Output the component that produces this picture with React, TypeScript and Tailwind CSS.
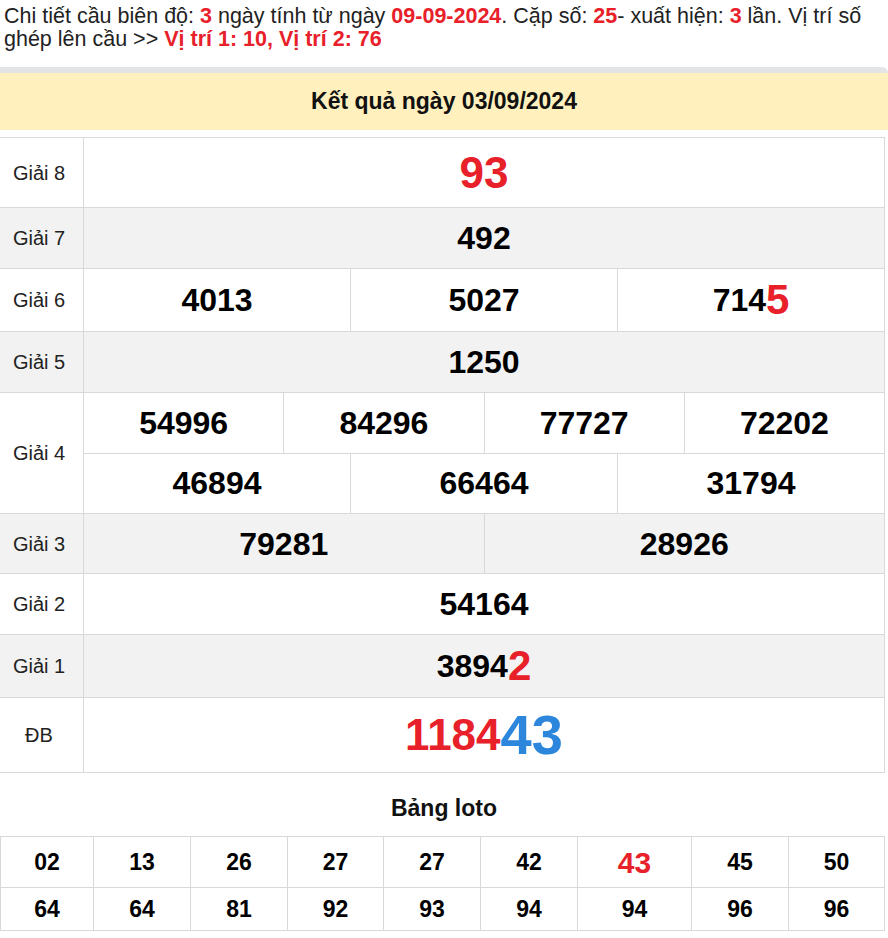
const border = "border-[#d9d9d9]";

type Cell = { text: string; tail?: string; tailClass?: string; className?: string };

const rows: { label: string; shade: boolean; lines: Cell[][]; height: string }[] = [
  {
    label: "Giải 8",
    shade: false,
    height: "h-[70px]",
    lines: [[{ text: "93", className: "text-[44px] text-[#e8202a]" }]],
  },
  { label: "Giải 7", shade: true, height: "h-[61px]", lines: [[{ text: "492" }]] },
  {
    label: "Giải 6",
    shade: false,
    height: "h-[63px]",
    lines: [
      [
        { text: "4013" },
        { text: "5027" },
        { text: "714", tail: "5", tailClass: "text-[42px] text-[#e8202a]" },
      ],
    ],
  },
  { label: "Giải 5", shade: true, height: "h-[61px]", lines: [[{ text: "1250" }]] },
  {
    label: "Giải 4",
    shade: false,
    height: "h-[121px]",
    lines: [
      [{ text: "54996" }, { text: "84296" }, { text: "77727" }, { text: "72202" }],
      [{ text: "46894" }, { text: "66464" }, { text: "31794" }],
    ],
  },
  { label: "Giải 3", shade: true, height: "h-[60px]", lines: [[{ text: "79281" }, { text: "28926" }]] },
  { label: "Giải 2", shade: false, height: "h-[61px]", lines: [[{ text: "54164" }]] },
  {
    label: "Giải 1",
    shade: true,
    height: "h-[63px]",
    lines: [[{ text: "3894", tail: "2", tailClass: "text-[42px] text-[#e8202a]" }]],
  },
  {
    label: "ĐB",
    shade: false,
    height: "h-[75px]",
    lines: [
      [
        {
          text: "1184",
          tail: "43",
          tailClass: "text-[56px] text-[#2b86dc]",
          className: "text-[44px] text-[#e8202a]",
        },
      ],
    ],
  },
];

const loto = [
  ["02", "13", "26", "27", "27", "42", "43", "45", "50"],
  ["64", "64", "81", "92", "93", "94", "94", "96", "96"],
];

const lotoWidths = ["w-[93px]", "w-[97px]", "w-[97px]", "w-[96px]", "w-[97px]", "w-[97px]", "w-[114px]", "w-[97px]", "w-[96px]"];

function PrizeRow({ label, shade, lines, height }: (typeof rows)[number]) {
  return (
    <div className={`flex ${height} border-b ${border} ${shade ? "bg-[#f2f2f2]" : "bg-white"}`}>
      <div
        className={`w-[84px] shrink-0 border-r ${border} flex items-center ${
          label === "ĐB" ? "pl-[25px]" : "pl-[13px]"
        } text-[20px] text-[#222]`}
      >
        {label}
      </div>
      <div className="flex-1 flex flex-col">
        {lines.map((line, i) => (
          <div key={i} className={`flex flex-1 ${i > 0 ? `border-t ${border}` : ""}`}>
            {line.map((c, j) => (
              <div
                key={j}
                className={`flex-1 flex items-center justify-center font-bold ${j > 0 ? `border-l ${border}` : ""}`}
              >
                <span className={`leading-none ${c.className ?? "text-[32px] text-black"}`}>{c.text}</span>
                {c.tail && <span className={`leading-none ${c.tailClass}`}>{c.tail}</span>}
              </div>
            ))}
          </div>
        ))}
      </div>
    </div>
  );
}

export default function App() {
  return (
    <div className="w-[888px] min-h-[938px] bg-white font-['Liberation_Sans',Arial,sans-serif] text-[#222]">
      <p className="px-[4px] pt-[5px] text-[21.5px] leading-[23px]">
        Chi tiết cầu biên độ: <b className="text-[#e8202a]">3</b> ngày tính từ ngày{" "}
        <b className="text-[#e8202a]">09-09-2024</b>. Cặp số: <b className="text-[#e8202a]">25</b>- xuất hiện:{" "}
        <b className="text-[#e8202a]">3</b> lần. Vị trí số ghép lên cầu &gt;&gt;{" "}
        <b className="text-[#e8202a]">Vị trí 1: 10, Vị trí 2: 76</b>
      </p>

      <div className="mt-[16px] h-[6px] bg-[#e3e4e6] rounded-tr-[6px]" />
      <div className="h-[57px] bg-[#fff0bd] flex items-center justify-center text-[23px] font-bold text-[#111]">
        Kết quả ngày 03/09/2024
      </div>

      <div className={`mt-[7px] w-[885px] border-t border-r ${border}`}>
        {rows.map((r) => (
          <PrizeRow key={r.label} {...r} />
        ))}
      </div>

      <h2 className="mt-[21px] text-center text-[23px] leading-[28px] font-bold text-[#111]">Bảng loto</h2>

      <table className={`mt-[14px] w-[884px] table-fixed border-collapse border ${border}`}>
        <tbody>
          {loto.map((row, i) => (
            <tr key={i}>
              {row.map((n, j) => (
                <td
                  key={j}
                  className={`${lotoWidths[j]} border ${border} text-center font-bold ${
                    i === 0 ? "h-[51px]" : "h-[43px]"
                  }`}
                >
                  <span
                    className={
                      i === 0 && j === 6 ? "text-[30px] text-[#e8202a]" : "text-[23px] text-black"
                    }
                  >
                    {n}
                  </span>
                </td>
              ))}
            </tr>
          ))}
        </tbody>
      </table>
    </div>
  );
}
